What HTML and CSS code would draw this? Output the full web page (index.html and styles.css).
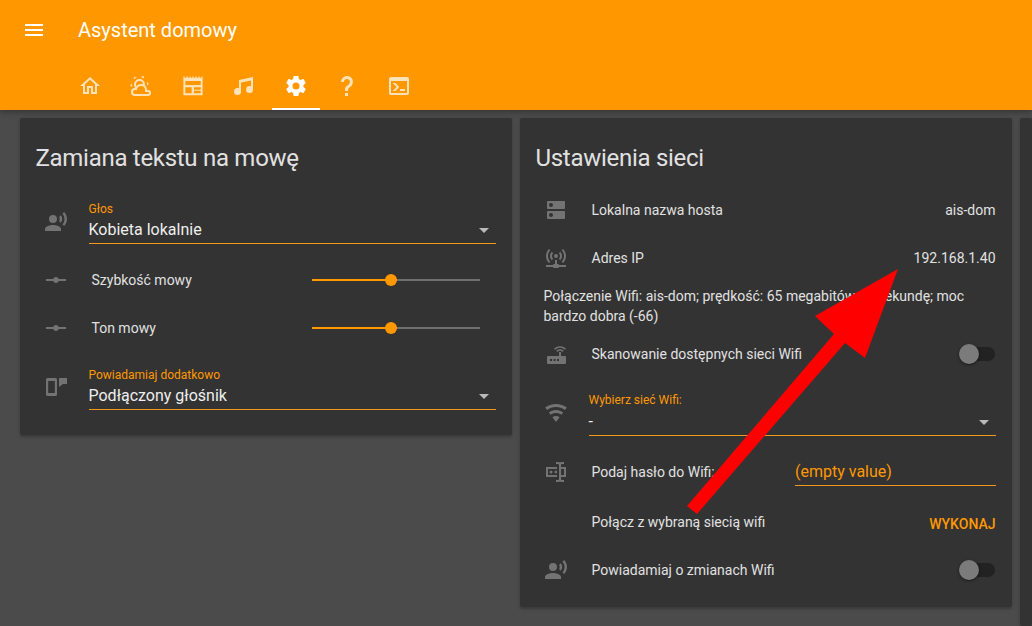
FILE: index.html
```html
<!DOCTYPE html>
<html lang="pl">
<head>
    <meta charset="UTF-8">
    <meta name="viewport" content="width=device-width, initial-scale=1.0">
    <title>Asystent domowy</title>
    <link rel="stylesheet" href="styles.css">
</head>
<body>
    <header class="app-header">
        <div class="toolbar">
            <svg class="menu-icon" viewBox="0 0 24 24"><path d="M3,6H21V8H3V6M3,11H21V13H3V11M3,16H21V18H3V16Z"/></svg>
            <div class="app-title">Asystent domowy</div>
        </div>
        <nav class="tabs">
            <div class="tab"><svg viewBox="0 0 24 24"><path d="M12 5.69L17 10.19V18H15V12H9V18H7V10.19L12 5.69M12 3L2 12H5V20H11V14H13V20H19V12H22L12 3Z"/></svg></div>
            <div class="tab"><svg viewBox="0 0 24 24"><path d="M12.74,5.47C15.1,6.5 16.35,9.03 15.92,11.46C17.19,12.56 18,14.19 18,16V16.17C18.31,16.06 18.65,16 19,16A3,3 0 0,1 22,19A3,3 0 0,1 19,22H6A4,4 0 0,1 2,18A4,4 0 0,1 6,14H6.27C5,12.45 4.6,10.24 5.5,8.26C6.72,5.5 9.97,4.24 12.74,5.47M11.93,7.3C10.16,6.5 8.09,7.31 7.31,9.07C6.85,10.09 6.93,11.22 7.41,12.13C8.5,10.83 10.16,10 12,10C12.7,10 13.38,10.12 14,10.34C13.94,9.06 13.18,7.86 11.93,7.3M13.55,3.64C13,3.4 12.45,3.23 11.88,3.12L14.37,1.82L15.27,4.71C14.76,4.29 14.19,3.93 13.55,3.64M6.09,4.44C5.6,4.79 5.17,5.19 4.8,5.63L4.91,2.82L7.87,3.5C7.25,3.71 6.65,4.03 6.09,4.44M18,9.71C17.91,9.12 17.78,8.55 17.59,8L19.97,9.5L17.92,11.73C18.03,11.08 18.05,10.4 18,9.71M3.04,11.3C3.11,11.9 3.24,12.47 3.43,13L1.06,11.5L3.1,9.28C3,9.93 2.97,10.61 3.04,11.3M19,18H16V16A4,4 0 0,0 12,12A4,4 0 0,0 8,16H6A2,2 0 0,0 4,18A2,2 0 0,0 6,20H19A1,1 0 0,0 20,19A1,1 0 0,0 19,18Z"/></svg></div>
            <div class="tab"><svg viewBox="0 0 24 24"><path fill-rule="evenodd" d="M2.4 21.2V2.6H3.6V3.8H5.4V2.6H6.6V3.8H8.4V2.6H9.6V3.8H11.4V2.6H12.6V3.8H14.4V2.6H15.6V3.8H17.4V2.6H18.6V3.8H20.4V2.6H21.6V21.2ZM4.3 7V11H19.7V7ZM4.3 13.2V19.2H10.7V13.2ZM13 13.2V15.8H19.7V13.2ZM13 16.8V19.2H19.7V16.8Z"/></svg></div>
            <div class="tab"><svg viewBox="0 0 24 24"><path d="M21,3V15.5A3.5,3.5 0 0,1 17.5,19A3.5,3.5 0 0,1 14,15.5A3.5,3.5 0 0,1 17.5,12C18.04,12 18.55,12.12 19,12.34V6.47L9,8.6V17.5A3.5,3.5 0 0,1 5.5,21A3.5,3.5 0 0,1 2,17.5A3.5,3.5 0 0,1 5.5,14C6.04,14 6.55,14.12 7,14.34V6L21,3Z"/></svg></div>
            <div class="tab tab-active"><svg viewBox="0 0 24 24"><path d="M12,15.5A3.5,3.5 0 0,1 8.5,12A3.5,3.5 0 0,1 12,8.5A3.5,3.5 0 0,1 15.5,12A3.5,3.5 0 0,1 12,15.5M19.43,12.97C19.47,12.65 19.5,12.33 19.5,12C19.5,11.67 19.47,11.34 19.43,11L21.54,9.37C21.73,9.22 21.78,8.95 21.66,8.73L19.66,5.27C19.54,5.05 19.27,4.96 19.05,5.05L16.56,6.05C16.04,5.66 15.5,5.32 14.87,5.07L14.5,2.42C14.46,2.18 14.25,2 14,2H10C9.75,2 9.54,2.18 9.5,2.42L9.13,5.07C8.5,5.32 7.96,5.66 7.44,6.05L4.95,5.05C4.73,4.96 4.46,5.05 4.34,5.27L2.34,8.73C2.21,8.95 2.27,9.22 2.46,9.37L4.57,11C4.53,11.34 4.5,11.67 4.5,12C4.5,12.33 4.53,12.65 4.57,12.97L2.46,14.63C2.27,14.78 2.21,15.05 2.34,15.27L4.34,18.73C4.46,18.95 4.73,19.03 4.95,18.95L7.44,17.94C7.96,18.34 8.5,18.68 9.13,18.93L9.5,21.58C9.54,21.82 9.75,22 10,22H14C14.25,22 14.46,21.82 14.5,21.58L14.87,18.93C15.5,18.67 16.04,18.34 16.56,17.94L19.05,18.95C19.27,19.03 19.54,18.95 19.66,18.73L21.66,15.27C21.78,15.05 21.73,14.78 21.54,14.63L19.43,12.97Z"/></svg></div>
            <div class="tab"><svg viewBox="0 0 24 24"><path d="M10,19H13V22H10V19M12,2C17.35,2.22 19.68,7.62 16.5,11.67C15.67,12.67 14.33,13.33 13.67,14.17C13,15 13,16 13,17H10C10,15.33 10,13.92 10.67,12.92C11.33,11.92 12.67,11.33 13.5,10.67C15.92,8.43 15.32,5.26 12,5A3,3 0 0,0 9,8H6A6,6 0 0,1 12,2Z"/></svg></div>
            <div class="tab"><svg viewBox="0 0 24 24"><path d="M20,19V7H4V19H20M20,3A2,2 0 0,1 22,5V19A2,2 0 0,1 20,21H4A2,2 0 0,1 2,19V5C2,3.89 2.9,3 4,3H20M13,17V15H18V17H13M9.58,13L5.57,9H8.4L11.7,12.3C12.09,12.69 12.09,13.33 11.7,13.72L8.42,17H5.59L9.58,13Z"/></svg></div>
        </nav>
    </header>

    <main class="cards">
        <section class="card">
            <h2 class="card-title">Zamiana tekstu na mowę</h2>
            <div class="row row-select">
                <svg class="row-icon" viewBox="0 0 24 24"><path d="M9,5A4,4 0 0,1 13,9A4,4 0 0,1 9,13A4,4 0 0,1 5,9A4,4 0 0,1 9,5M9,15C11.67,15 17,16.34 17,19V21H1V19C1,16.34 6.33,15 9,15M16.76,5.36C18.78,7.56 18.78,10.61 16.76,12.63L15.08,10.94C15.92,9.76 15.92,8.23 15.08,7.05L16.76,5.36M20.07,2C24,6.05 23.97,12.11 20.07,16L18.44,14.37C21.21,11.19 21.21,6.65 18.44,3.63L20.07,2Z"/></svg>
                <div class="select">
                    <div class="select-label">Głos</div>
                    <div class="select-value">Kobieta lokalnie</div>
                    <div class="select-arrow"></div>
                </div>
            </div>
            <div class="row">
                <svg class="row-icon" viewBox="0 0 24 24"><path d="M2,11H9.17C9.58,9.83 10.69,9 12,9C13.31,9 14.42,9.83 14.83,11H22V13H14.83C14.42,14.17 13.31,15 12,15C10.69,15 9.58,14.17 9.17,13H2V11Z"/></svg>
                <div class="row-text">Szybkość mowy</div>
                <div class="slider"><div class="slider-fill"></div><div class="slider-thumb"></div></div>
            </div>
            <div class="row">
                <svg class="row-icon" viewBox="0 0 24 24"><path d="M2,11H9.17C9.58,9.83 10.69,9 12,9C13.31,9 14.42,9.83 14.83,11H22V13H14.83C14.42,14.17 13.31,15 12,15C10.69,15 9.58,14.17 9.17,13H2V11Z"/></svg>
                <div class="row-text">Ton mowy</div>
                <div class="slider"><div class="slider-fill"></div><div class="slider-thumb"></div></div>
            </div>
            <div class="row row-select row-select-last">
                <svg class="row-icon" viewBox="0 0 24 24"><path fill-rule="evenodd" d="M3.5 2H11.5A1.5 1.5 0 0 1 13 3.5V18.5A1.5 1.5 0 0 1 11.5 20H3.5A1.5 1.5 0 0 1 2 18.5V3.5A1.5 1.5 0 0 1 3.5 2ZM4.2 5V17H10.8V5ZM15.5 2H23V8H19L15 11V2.5A.5 .5 0 0 1 15.5 2Z"/></svg>
                <div class="select">
                    <div class="select-label">Powiadamiaj dodatkowo</div>
                    <div class="select-value">Podłączony głośnik</div>
                    <div class="select-arrow"></div>
                </div>
            </div>
        </section>

        <section class="card">
            <h2 class="card-title card-title-tight">Ustawienia sieci</h2>
            <div class="row">
                <svg class="row-icon" viewBox="0 0 24 24"><path d="M20 13H4c-.55 0-1 .45-1 1v6c0 .55.45 1 1 1h16c.55 0 1-.45 1-1v-6c0-.55-.45-1-1-1zM7 19c-1.1 0-2-.9-2-2s.9-2 2-2 2 .9 2 2-.9 2-2 2zM20 3H4c-.55 0-1 .45-1 1v6c0 .55.45 1 1 1h16c.55 0 1-.45 1-1V4c0-.55-.45-1-1-1zM7 9c-1.1 0-2-.9-2-2s.9-2 2-2 2 .9 2 2-.9 2-2 2z"/></svg>
                <div class="row-text">Lokalna nazwa hosta</div>
                <div class="row-value">ais-dom</div>
            </div>
            <div class="row">
                <svg class="row-icon" viewBox="0 0 24 24"><path d="M4.93,2.93C3.12,4.74 2,7.24 2,10C2,12.76 3.12,15.26 4.93,17.07L6.34,15.66C4.89,14.22 4,12.22 4,10C4,7.79 4.89,5.78 6.34,4.34L4.93,2.93M19.07,2.93L17.66,4.34C19.11,5.78 20,7.79 20,10C20,12.22 19.11,14.22 17.66,15.66L19.07,17.07C20.88,15.26 22,12.76 22,10C22,7.24 20.88,4.74 19.07,2.93M7.76,5.76C6.67,6.85 6,8.35 6,10C6,11.65 6.67,13.15 7.76,14.24L9.17,12.83C8.45,12.11 8,11.11 8,10C8,8.89 8.45,7.89 9.17,7.17L7.76,5.76M16.24,5.76L14.83,7.17C15.55,7.89 16,8.89 16,10C16,11.11 15.55,12.11 14.83,12.83L16.24,14.24C17.33,13.15 18,11.65 18,10C18,8.35 17.33,6.85 16.24,5.76M12,8A2,2 0 0,0 10,10A2,2 0 0,0 12,12A2,2 0 0,0 14,10A2,2 0 0,0 12,8M11,14V18H10A1,1 0 0,0 9,19H2V21H9A1,1 0 0,0 10,22H14A1,1 0 0,0 15,21H22V19H15A1,1 0 0,0 14,18H13V14H11Z"/></svg>
                <div class="row-text">Adres IP</div>
                <div class="row-value">192.168.1.40</div>
            </div>
            <p class="wifi-info">Połączenie Wifi: ais-dom; prędkość: 65 megabitów na sekundę; moc bardzo dobra (-66)</p>
            <div class="row">
                <svg class="row-icon" viewBox="0 0 24 24"><path fill-rule="evenodd" d="M4 14H15V10H17V14H21A1 1 0 0 1 22 15V21A1 1 0 0 1 21 22H4A1 1 0 0 1 3 21V15A1 1 0 0 1 4 14ZM6 17V19H8V17ZM9.5 17V19H11.5V17ZM13 17V19H15V17Z"/><path class="icon-arc" d="M10.5 7.2C13.5 4.2 18.5 4.2 21.5 7.2M12.8 9.3C14.6 7.6 17.4 7.6 19.2 9.3"/></svg>
                <div class="row-text">Skanowanie dostępnych sieci Wifi</div>
                <div class="toggle"><div class="toggle-thumb"></div></div>
            </div>
            <div class="row row-wifi">
                <svg class="row-icon" viewBox="0 0 24 24"><path d="M12,21L15.6,16.2C14.6,15.45 13.35,15 12,15C10.65,15 9.4,15.45 8.4,16.2L12,21M12,3C7.95,3 4.21,4.34 1.2,6.6L3,9C5.5,7.12 8.62,6 12,6C15.38,6 18.5,7.12 21,9L22.8,6.6C19.79,4.34 16.05,3 12,3M12,9C9.3,9 6.81,9.89 4.8,11.4L6.6,13.8C8.1,12.67 9.97,12 12,12C14.03,12 15.9,12.67 17.4,13.8L19.2,11.4C17.19,9.89 14.7,9 12,9Z"/></svg>
                <div class="select select-small">
                    <div class="select-label">Wybierz sieć Wifi:</div>
                    <div class="select-value">-</div>
                    <div class="select-arrow"></div>
                </div>
            </div>
            <div class="row">
                <svg class="row-icon" viewBox="0 0 24 24"><path d="M17,7H22V17H17V19A1,1 0 0,0 18,20H20V22H17.5C16.95,22 16,21.55 16,21C16,21.55 15.05,22 14.5,22H12V20H14A1,1 0 0,0 15,19V5A1,1 0 0,0 14,4H12V2H14.5C15.05,2 16,2.45 16,3C16,2.45 16.95,2 17.5,2H20V4H18A1,1 0 0,0 17,5V7M2,7H13V9H4V15H13V17H2V7M20,15V9H17V15H20M8.5,12A1.5,1.5 0 0,0 7,10.5A1.5,1.5 0 0,0 5.5,12A1.5,1.5 0 0,0 7,13.5A1.5,1.5 0 0,0 8.5,12M13,10.89C12.39,10.33 11.44,10.38 10.88,11C10.32,11.6 10.37,12.55 11,13.11C11.55,13.63 12.43,13.63 13,13.11V10.89Z"/></svg>
                <div class="row-text">Podaj hasło do Wifi:</div>
                <div class="text-input">(empty value)</div>
            </div>
            <div class="row row-action">
                <div class="row-text row-text-noicon">Połącz z wybraną siecią wifi</div>
                <div class="action">WYKONAJ</div>
            </div>
            <div class="row">
                <svg class="row-icon" viewBox="0 0 24 24"><path d="M9,5A4,4 0 0,1 13,9A4,4 0 0,1 9,13A4,4 0 0,1 5,9A4,4 0 0,1 9,5M9,15C11.67,15 17,16.34 17,19V21H1V19C1,16.34 6.33,15 9,15M16.76,5.36C18.78,7.56 18.78,10.61 16.76,12.63L15.08,10.94C15.92,9.76 15.92,8.23 15.08,7.05L16.76,5.36M20.07,2C24,6.05 23.97,12.11 20.07,16L18.44,14.37C21.21,11.19 21.21,6.65 18.44,3.63L20.07,2Z"/></svg>
                <div class="row-text">Powiadamiaj o zmianach Wifi</div>
                <div class="toggle"><div class="toggle-thumb"></div></div>
            </div>
        </section>

        <section class="card card-cut"></section>
    </main>

    <!-- red arrow drawn over the screenshot -->
    <svg class="red-arrow" viewBox="0 0 1032 626"><polygon points="898,269 815,316 834,334 687,506 697,514 845,343 865,358"/></svg>
</body>
</html>
```

FILE: styles.css
```css
html, body {
    height: 100%;
}
body {
    margin: 0;
    overflow: hidden;
    font-family: Roboto, "Liberation Sans", sans-serif;
    font-size: 14px;
    color: #e1e1e1;
    background-color: #4b4b4b;
}
svg {
    fill: currentColor;
    display: block;
}

/* header */
.app-header {
    height: 110px;
    background-color: #ff9800;
    color: #fff;
    box-shadow: 0 2px 6px rgba(0, 0, 0, 0.3);
    position: relative;
}
.toolbar {
    height: 62px;
    display: flex;
    align-items: flex-start;
}
.menu-icon {
    width: 24px;
    height: 24px;
    margin: 18px 32px 0 22px;
}
.app-title {
    font-size: 20px;
    line-height: 24px;
    margin-top: 18px;
}
.tabs {
    display: flex;
    gap: 3.43px;
    padding-left: 66px;
}
.tab {
    width: 48px;
    height: 48px;
    box-sizing: border-box;
    display: flex;
    align-items: center;
    justify-content: center;
    color: rgba(255, 255, 255, 0.72);
}
.tab svg {
    width: 24px;
    height: 24px;
}
.tab-active {
    color: #fff;
    border-bottom: 2px solid #fff;
    padding-top: 2px;
}

/* cards */
.cards {
    display: flex;
    align-items: flex-start;
    gap: 8px;
    padding: 8px 0 0 20px;
}
.card {
    width: 492px;
    flex-shrink: 0;
    box-sizing: border-box;
    padding: 0 16px 13px;
    background-color: #333;
    border-radius: 2px;
    box-shadow: 0 2px 2px rgba(0, 0, 0, 0.14), 0 1px 5px rgba(0, 0, 0, 0.12);
}
.card-cut {
    flex: 1;
    width: auto;
    min-width: 0;
    padding: 0;
    height: 508px;
}
.card-title {
    margin: 0 0 0 -0.5px;
    padding: 24px 0 16px;
    font-size: 24px;
    line-height: 32px;
    font-weight: 400;
    letter-spacing: -0.012em;
    color: #e1e1e1;
}
.card-title-tight {
    padding-bottom: 12px;
}

/* rows */
.row {
    height: 48px;
    display: flex;
    align-items: center;
}
.row-icon {
    width: 24px;
    height: 24px;
    margin-left: 8px;
    margin-right: 24px;
    flex-shrink: 0;
    color: #737373;
}
.icon-arc {
    fill: none;
    stroke: currentColor;
    stroke-width: 1.6;
}
.row-text {
    flex: 1;
    margin-left: -0.5px;
    white-space: nowrap;
}
.row-text-noicon {
    margin-left: 55.5px;
    margin-bottom: 4px;
}
.row-value {
    margin-right: 0.5px;
    text-align: right;
}
.row-select {
    height: 66px;
    align-items: flex-start;
}
.row-select .row-icon {
    margin-top: 20px;
}
.row-select-last {
    margin-top: 4px;
}
.row-wifi {
    height: 70px;
    align-items: flex-start;
}
.row-wifi .row-icon {
    margin-top: 23px;
}
.row-action {
    height: 44px;
    padding-top: 6px;
}
.wifi-info {
    margin: 4px 0;
    padding-left: 7.5px;
    line-height: 20px;
}

/* select */
.select {
    flex: 1;
    position: relative;
    margin-left: -3px;
    padding-top: 12px;
    height: 41px;
    border-bottom: 1px solid #f0981c;
}
.select-label {
    font-size: 12px;
    line-height: 14px;
    margin-bottom: 2px;
    margin-left: -0.5px;
    color: #ff9800;
}
.select-value {
    font-size: 16px;
    line-height: 24px;
    margin-left: -0.5px;
    color: #eee;
}
.select-arrow {
    position: absolute;
    right: 7px;
    bottom: 10px;
    width: 0;
    height: 0;
    border-left: 5px solid transparent;
    border-right: 5px solid transparent;
    border-top: 5px solid #b9b9b9;
}
.select-small {
    padding-top: 15px;
    height: 42px;
}
.select-small .select-label {
    margin-bottom: 3px;
}

/* slider */
.slider {
    width: 168px;
    height: 2px;
    margin-right: 16px;
    position: relative;
    background-color: #6f6f6f;
}
.slider-fill {
    width: 47%;
    height: 100%;
    background-color: #ff9800;
}
.slider-thumb {
    position: absolute;
    left: 47%;
    top: -5px;
    width: 12px;
    height: 12px;
    margin-left: -6px;
    border-radius: 50%;
    background-color: #ff9800;
}

/* toggle */
.toggle {
    width: 34px;
    height: 14px;
    margin-right: 1px;
    border-radius: 7px;
    background-color: #222;
    position: relative;
}
.toggle-thumb {
    position: absolute;
    left: -2px;
    top: -3px;
    width: 20px;
    height: 20px;
    border-radius: 50%;
    background-color: #7b7b7b;
    box-shadow: 0 1px 3px rgba(0, 0, 0, 0.5);
}

/* password input */
.text-input {
    width: 201px;
    margin-top: 2px;
    font-size: 16px;
    line-height: 24px;
    color: #ff9800;
    border-bottom: 1px solid #f0981c;
    padding-bottom: 1px;
}
.action {
    margin-right: 0.5px;
    font-weight: 500;
    color: #ff9800;
}

.red-arrow {
    position: absolute;
    left: 0;
    top: 0;
    width: 1032px;
    height: 626px;
    fill: #ff0000;
    pointer-events: none;
}
```
